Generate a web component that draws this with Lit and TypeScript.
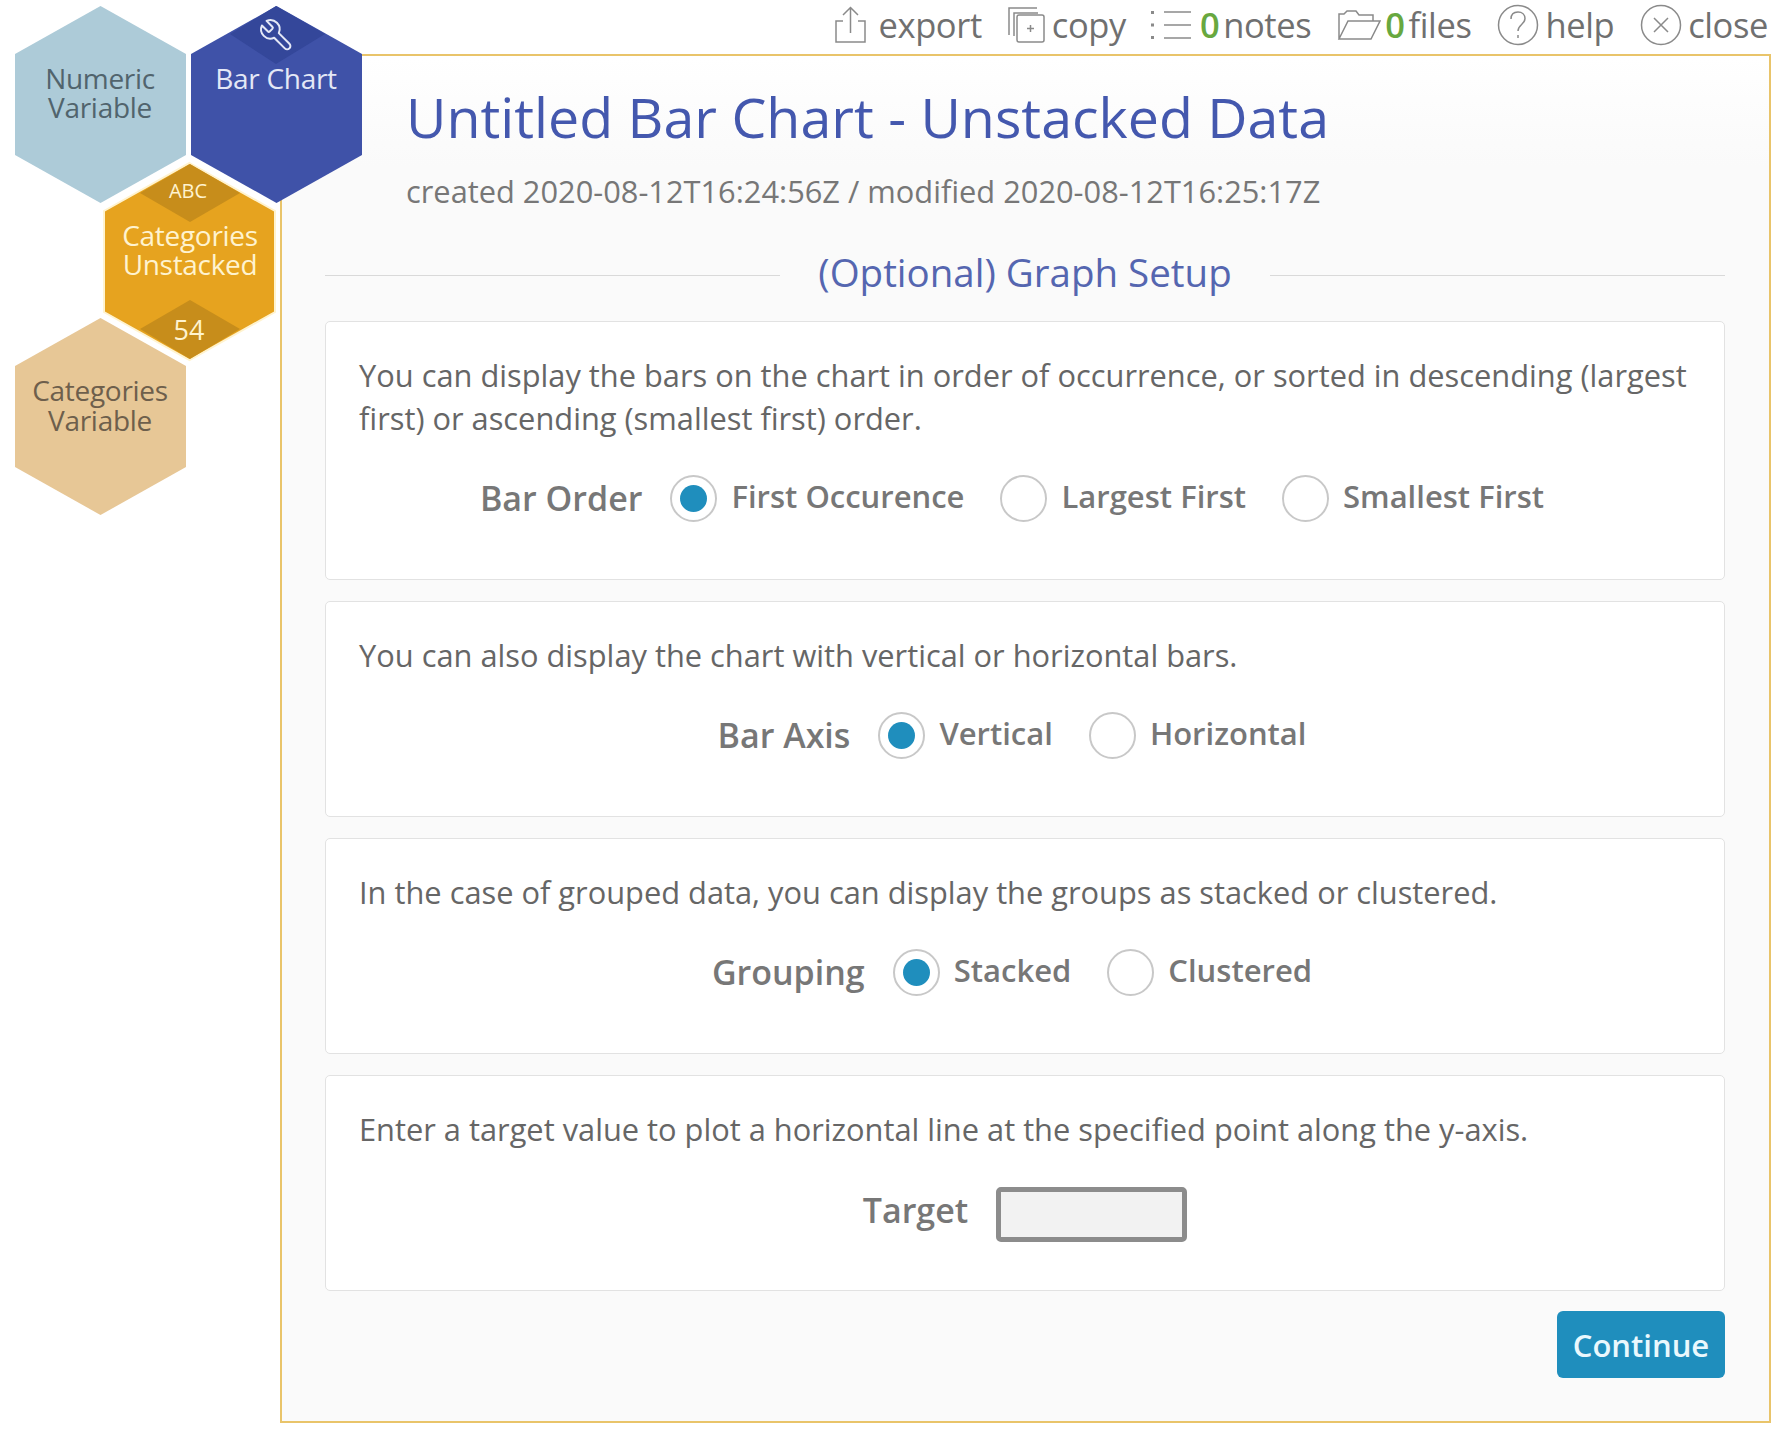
import { LitElement, html, css, svg } from "lit"
import { customElement } from "lit/decorators.js"

interface RadioRow {
  text: string[]
  label: string
  options: string[]
}

const rows: RadioRow[] = [
  {
    text: [
      "You can display the bars on the chart in order of occurrence, or sorted in descending (largest",
      "first) or ascending (smallest first) order.",
    ],
    label: "Bar Order",
    options: ["First Occurence", "Largest First", "Smallest First"],
  },
  {
    text: ["You can also display the chart with vertical or horizontal bars."],
    label: "Bar Axis",
    options: ["Vertical", "Horizontal"],
  },
  {
    text: ["In the case of grouped data, you can display the groups as stacked or clustered."],
    label: "Grouping",
    options: ["Stacked", "Clustered"],
  },
]

// flat-shouldered hexagon, 171 wide and 197 tall, from its top-left corner
function hex(x: number, y: number, fill: string, stroke = "none") {
  const p = [
    [85.5, 0],
    [171, 48],
    [171, 149],
    [85.5, 197],
    [0, 149],
    [0, 48],
  ]
    .map(([a, b]) => `${x + a},${y + b}`)
    .join(" ")
  return svg`<polygon points=${p} fill=${fill} stroke=${stroke} stroke-width="2"></polygon>`
}

const hexes = svg`
  <svg class="hexes" width="380" height="530" viewBox="0 0 380 530">
    ${hex(15, 6, "#adcbd8")}
    ${hex(191, 6, "#3f52a8")}
    <polygon points="276,6 230,34 276,64 325,34" fill="#34479a"></polygon>
    <g transform="translate(295 17) scale(-1.54 1.54)" fill="none" stroke="#e4e8f6" stroke-width="1.3" stroke-linejoin="round">
      <path d="M14.7 6.3a1 1 0 0 0 0 1.4l1.6 1.6a1 1 0 0 0 1.4 0l3.77-3.77a6 6 0 0 1-7.94 7.94l-6.91 6.91a2.12 2.12 0 0 1-3-3l6.91-6.91a6 6 0 0 1 7.94-7.94l-3.76 3.76z"></path>
    </g>
    ${hex(15, 318, "#e7c796")}
    ${hex(104, 163, "#e6a31f", "#fff3cf")}
    <polygon points="190,164 140,193 190,222 240,193" fill="#c78d1b"></polygon>
    <polygon points="190,300 140,329 190,359 240,329" fill="#c78d1b"></polygon>
    <text class="hex-t dim-b" x="100" y="89">Numeric</text>
    <text class="hex-t dim-b" x="100" y="118">Variable</text>
    <text class="hex-t on-b" x="276" y="89">Bar Chart</text>
    <text class="hex-abc" x="188" y="198">ABC</text>
    <text class="hex-t on-o" x="190" y="246">Categories</text>
    <text class="hex-t on-o" x="190" y="275">Unstacked</text>
    <text class="hex-n" x="189" y="340">54</text>
    <text class="hex-t dim-o" x="100" y="401">Categories</text>
    <text class="hex-t dim-o" x="100" y="431">Variable</text>
  </svg>
`

const icons = {
  export: html`<svg class="ic" width="33" height="38" viewBox="0 0 33 38">
    <path d="M9 15H2v21h29V15h-7M16.500 27V2M9 9l7.500-7.500L24 9"></path>
  </svg>`,
  copy: html`<svg class="ic" width="37" height="36" viewBox="0 0 37 36">
    <path d="M1 28V1h28M6 29V6h24"></path>
    <rect x="9" y="8" width="27" height="27" rx="2"></rect>
    <path d="M22.500 18v7M19 21.500h7"></path>
  </svg>`,
  notes: html`<svg class="ic" width="43" height="32" viewBox="0 0 43 32">
    <path d="M15 3h27M15 16h27M15 29h27"></path>
    <path class="dot" d="M2 2h3v3H2zM2 14.500h3v3H2zM2 27h3v3H2z"></path>
  </svg>`,
  files: html`<svg class="ic" width="44" height="32" viewBox="0 0 44 32">
    <path d="M2 30V5h5l3-3h9l3 4h14v6M2 30h32l9-18H11L2 30z"></path>
  </svg>`,
  help: html`<svg class="ic" width="42" height="42" viewBox="0 0 42 42">
    <circle cx="21" cy="21" r="19.500"></circle>
    <path d="M14 15c0-5 3-7 7-7s7 2.500 7 6.500c0 6-7 6-7 12.500M21 31v3"></path>
  </svg>`,
  close: html`<svg class="ic" width="42" height="42" viewBox="0 0 42 42">
    <circle cx="21" cy="21" r="19.500"></circle>
    <path d="M14 14l14 14M28 14L14 28"></path>
  </svg>`,
}

@customElement("app-root")
export class AppRoot extends LitElement {
  static styles = css`
    :host {
      display: block;
      position: relative;
      width: 1791px;
      height: 1446px;
      background: #fff;
      font-family: "Open Sans", sans-serif;
      color: #666;
    }
    .hexes {
      position: absolute;
      left: 0;
      top: 0;
    }
    .hexes text {
      text-anchor: middle;
      font-family: "Open Sans", sans-serif;
    }
    .hex-t {
      font-size: 28px;
      letter-spacing: -0.3px;
    }
    .dim-b {
      fill: #51646d;
    }
    .dim-o {
      fill: #6e5f4c;
    }
    .on-b {
      fill: #e4e8f6;
    }
    .on-o {
      fill: #fff3cf;
    }
    .hex-abc {
      font-size: 20px;
      fill: #fff3cf;
    }
    .hex-n {
      font-size: 27px;
      fill: #fff3cf;
    }
    .toolbar {
      height: 54px;
      box-sizing: border-box;
      padding: 4px 23px 0 0;
      display: flex;
      justify-content: flex-end;
      align-items: flex-start;
      gap: 26px;
      font-size: 34.500px;
      line-height: 42px;
      letter-spacing: -0.4px;
      color: #707070;
    }
    .tool {
      display: flex;
      align-items: center;
      gap: 6px;
    }
    .tool.export {
      gap: 12px;
    }
    .tool.copy {
      gap: 7px;
      margin-right: -3px;
    }
    .tool.notes {
      gap: 8px;
    }
    .tool.files {
      gap: 4px;
    }
    .count {
      color: #68a83f;
      font-weight: 600;
      margin-right: 4px;
    }
    .ic {
      fill: none;
      stroke: #8a8a8a;
      stroke-width: 1.5;
      flex: none;
    }
    .ic .dot {
      fill: #8a8a8a;
      stroke: none;
    }
    .panel {
      margin-left: 280px;
      width: 1491px;
      height: 1369px;
      box-sizing: border-box;
      border: 2px solid #e9c46a;
      background: linear-gradient(#fff, #fafafa 110px);
      padding: 0 44px 0 43px;
    }
    h1 {
      margin: 27px 0 0 81px;
      font-size: 55.500px;
      line-height: 68px;
      font-weight: 400;
      color: #4458ae;
    }
    .meta {
      margin: 20px 0 0 81px;
      font-size: 30.800px;
      line-height: 40px;
      color: #777;
    }
    .legend {
      display: flex;
      align-items: center;
      gap: 38px;
      margin-top: 38px;
      height: 46px;
      font-size: 38.500px;
      color: #5566b0;
    }
    .legend::before,
    .legend::after {
      content: "";
      flex: 1;
      height: 1px;
      margin-top: 6px;
      background: #d9d9d9;
    }
    .card {
      box-sizing: border-box;
      margin-top: 26px;
      background: #fff;
      border: 1px solid #e2e2e2;
      border-radius: 5px;
      padding: 32px 33px 57px;
      font-size: 30.800px;
      line-height: 43px;
      color: #666;
    }
    .card + .card {
      margin-top: 21px;
    }
    .card p {
      margin: 0;
      white-space: nowrap;
    }
    .row {
      display: flex;
      justify-content: center;
      align-items: center;
      height: 47px;
      margin-top: 35px;
      padding-right: 26px;
      color: #777;
      font-weight: 600;
    }
    .row-label {
      margin-right: 28px;
      font-size: 34px;
    }
    .opt {
      display: flex;
      align-items: center;
      gap: 14px;
      margin-right: 36px;
      font-size: 31px;
    }
    .opt:last-child {
      margin-right: 0;
    }
    .opt-text {
      margin-bottom: 5px;
    }
    .radio {
      box-sizing: border-box;
      width: 47px;
      height: 47px;
      border: 2px solid #c8c8c8;
      border-radius: 50%;
      background: #fff;
      display: grid;
      place-items: center;
    }
    .radio.on::after {
      content: "";
      width: 27px;
      height: 27px;
      border-radius: 50%;
      background: #1f8ebd;
    }
    .target {
      padding-right: 0;
      margin-top: 36px;
      height: 55px;
    }
    .target .row-label {
      margin-bottom: 8px;
    }
    .input {
      box-sizing: border-box;
      width: 191px;
      height: 55px;
      border: 5px solid #8c8c8c;
      border-radius: 5px;
      background: #f2f2f2;
    }
    .last {
      padding-bottom: 48px;
    }
    .actions {
      display: flex;
      justify-content: flex-end;
      margin-top: 20px;
    }
    button {
      width: 168px;
      height: 67px;
      border: 0;
      border-radius: 6px;
      background: #1f8ebd;
      color: #eaf8fd;
      font: 600 31px "Open Sans", sans-serif;
    }
  `

  renderRow(r: RadioRow) {
    return html`<section class="card">
      ${r.text.map((t) => html`<p>${t}</p>`)}
      <div class="row">
        <span class="row-label">${r.label}</span>
        ${r.options.map(
          (o, i) =>
            html`<span class="opt"><span class="radio ${i === 0 ? "on" : ""}"></span><span class="opt-text">${o}</span></span>`,
        )}
      </div>
    </section>`
  }

  render() {
    return html`
      <nav class="toolbar">
        <span class="tool export">${icons.export}export</span>
        <span class="tool copy">${icons.copy}copy</span>
        <span class="tool notes">${icons.notes}<span><span class="count">0</span>notes</span></span>
        <span class="tool files">${icons.files}<span><span class="count">0</span>files</span></span>
        <span class="tool">${icons.help}help</span>
        <span class="tool">${icons.close}close</span>
      </nav>
      <main class="panel">
        <h1>Untitled Bar Chart - Unstacked Data</h1>
        <div class="meta">created 2020-08-12T16:24:56Z / modified 2020-08-12T16:25:17Z</div>
        <div class="legend">(Optional) Graph Setup</div>
        ${rows.map((r) => this.renderRow(r))}
        <section class="card last">
          <p>Enter a target value to plot a horizontal line at the specified point along the y-axis.</p>
          <div class="row target">
            <span class="row-label">Target</span>
            <span class="input"></span>
          </div>
        </section>
        <div class="actions"><button>Continue</button></div>
      </main>
      ${hexes}
    `
  }
}
